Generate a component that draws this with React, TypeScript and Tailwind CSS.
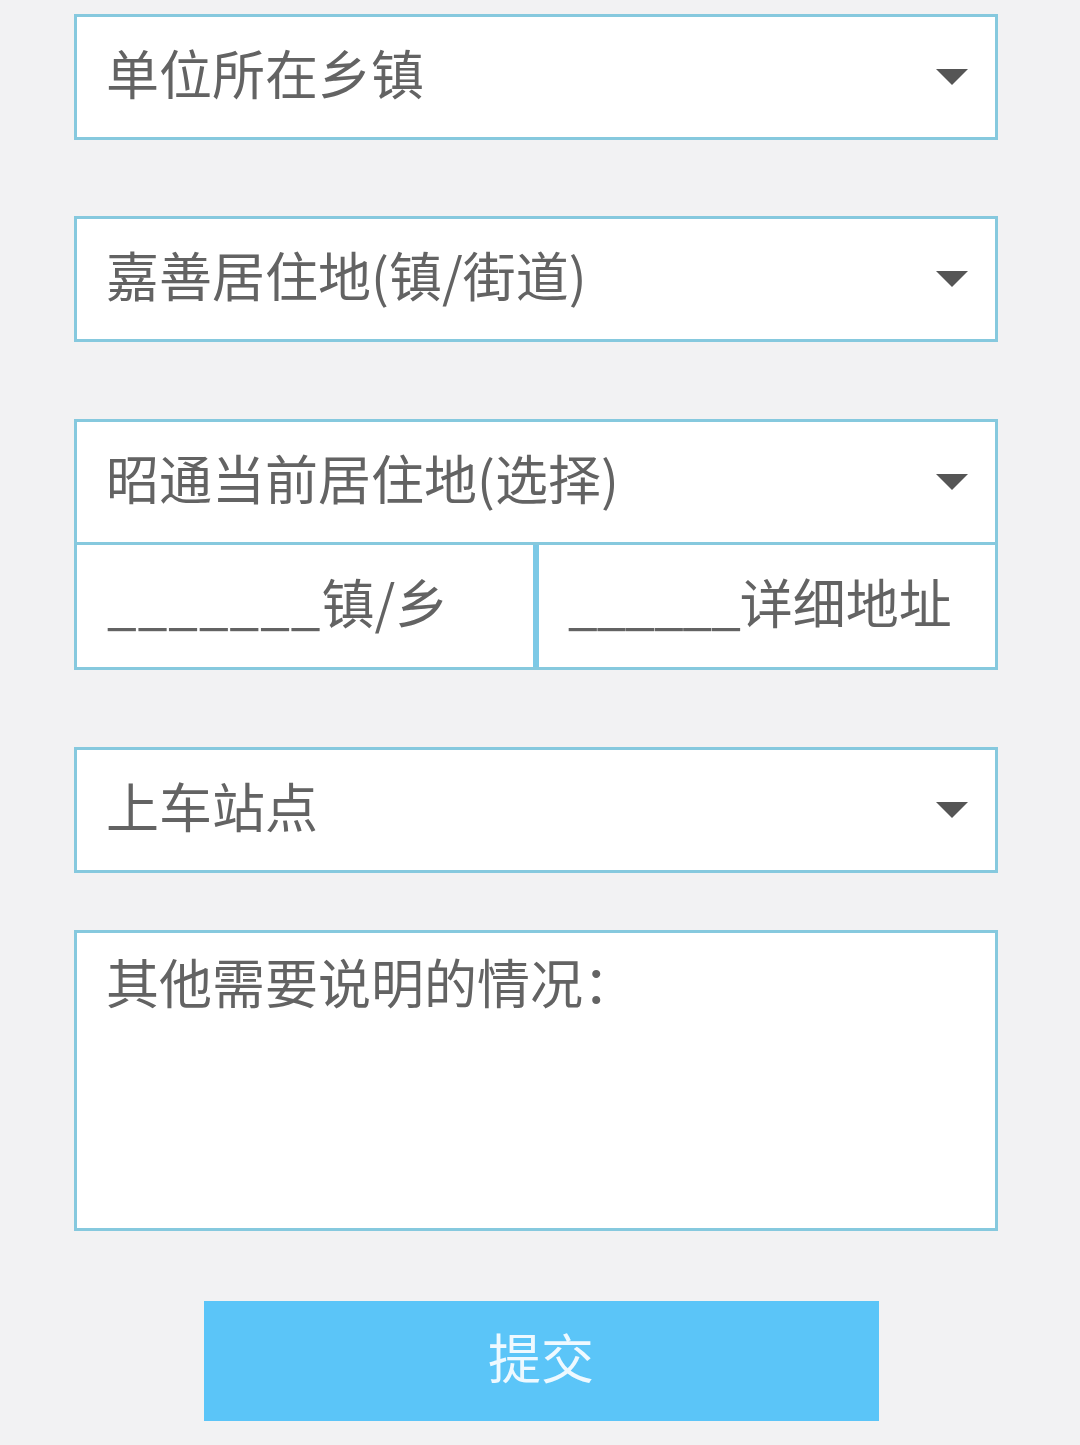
import React from 'react'

const font = { fontFamily: '"Noto Sans CJK SC", "Noto Sans", sans-serif' }

const Caret = () => (
    <svg width="32" height="16" viewBox="0 0 32 16" className="shrink-0">
        <polygon points="0,0 32,0 16,16" fill="#555555" />
    </svg>
)

const SelectBox = ({ label }: { label: string }) => (
    <div className="flex h-[126px] w-[924px] items-center justify-between border-[3px] border-[#86c9de] bg-white pl-[29px] pr-[27px]">
        <span className="pb-[10px] text-[53px] leading-none text-[#636363]">{label}</span>
        <Caret />
    </div>
)

const App = () => {
    return (
        <div className="min-h-[1445px] w-[1080px] bg-[#f2f2f3]" style={font}>
            <div className="flex flex-col pl-[74px] pt-[14px]">
                <SelectBox label="单位所在乡镇" />

                <div className="mt-[76px]">
                    <SelectBox label="嘉善居住地(镇/街道)" />
                </div>

                {/* current address group */}
                <div className="mt-[77px] w-[924px] border-[3px] border-[#86c9de] bg-white">
                    <div className="flex h-[123px] items-center justify-between border-b-[3px] border-[#86c9de] pl-[29px] pr-[27px]">
                        <span className="pb-[10px] text-[53px] leading-none text-[#636363]">昭通当前居住地(选择)</span>
                        <Caret />
                    </div>
                    <div className="grid h-[122px] grid-cols-2">
                        <div className="flex items-center border-r-[3px] border-[#7cc9e6] pl-[30px]">
                            <span className="pb-[10px] text-[53px] leading-none text-[#636363]">
                                <span className="tracking-[1px]">_______</span>镇/乡
                            </span>
                        </div>
                        <div className="flex items-center border-l-[3px] border-[#7cc9e6] pl-[29px]">
                            <span className="pb-[10px] text-[53px] leading-none text-[#636363]">
                                <span className="tracking-[-1px]">______</span>详细地址
                            </span>
                        </div>
                    </div>
                </div>

                <div className="mt-[77px]">
                    <SelectBox label="上车站点" />
                </div>

                <div className="mt-[57px] h-[301px] w-[924px] border-[3px] border-[#86c9de] bg-white pl-[29px] pt-[22px]">
                    <span className="text-[53px] leading-none text-[#636363]">其他需要说明的情况：</span>
                </div>
            </div>

            <div className="mt-[70px] flex justify-center">
                <button className="ml-[2px] flex h-[120px] w-[675px] items-center justify-center bg-[#5bc5f8] pb-[10px] text-[53px] leading-none text-[#eef9ff]">
                    提交
                </button>
            </div>
        </div>
    )
}

export default App
